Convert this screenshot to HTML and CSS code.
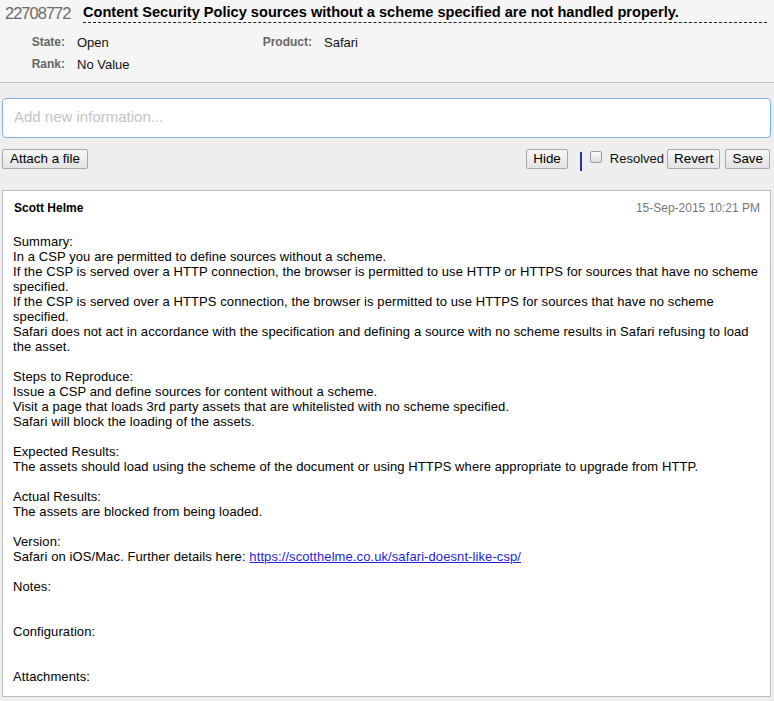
FILE: index.html
```html
<!DOCTYPE html>
<html lang="en">
<head>
<meta charset="utf-8">
<title>22708772 Content Security Policy sources without a scheme specified are not handled properly.</title>
<link rel="stylesheet" href="styles.css">
</head>
<body>
<div class="page">
  <header class="problem-header">
    <div class="title-row">
      <span class="problem-id">22708772</span>
      <h1 class="problem-title">Content Security Policy sources without a scheme specified are not handled properly.</h1>
    </div>
    <div class="meta-grid">
      <span class="meta-label">State:</span>
      <span class="meta-value">Open</span>
      <span class="meta-label">Product:</span>
      <span class="meta-value">Safari</span>
      <span class="meta-label">Rank:</span>
      <span class="meta-value">No Value</span>
    </div>
  </header>

  <div class="composer">
    <textarea class="new-info" placeholder="Add new information..."></textarea>
    <div class="actions">
      <button class="btn btn-attach" type="button">Attach a file</button>
      <div class="actions-right">
        <button class="btn" type="button">Hide</button>
        <span class="divider"></span>
        <label class="resolved"><span class="checkbox"></span><span class="resolved-text">Resolved</span></label>
        <button class="btn" type="button">Revert</button>
        <button class="btn" type="button">Save</button>
      </div>
    </div>
  </div>

  <article class="comment">
    <div class="comment-head">
      <span class="author">Scott Helme</span>
      <span class="date">15-Sep-2015 10:21 PM</span>
    </div>
    <div class="comment-body">Summary:
In a CSP you are permitted to define sources without a scheme.
If the CSP is served over a HTTP connection, the browser is permitted to use HTTP or HTTPS for sources that have no scheme
specified.
If the CSP is served over a HTTPS connection, the browser is permitted to use HTTPS for sources that have no scheme
specified.
Safari does not act in accordance with the specification and defining a source with no scheme results in Safari refusing to load
the asset.

Steps to Reproduce:
Issue a CSP and define sources for content without a scheme.
Visit a page that loads 3rd party assets that are whitelisted with no scheme specified.
Safari will block the loading of the assets.

Expected Results:
The assets should load using the scheme of the document or using HTTPS where appropriate to upgrade from HTTP.

Actual Results:
The assets are blocked from being loaded.

Version:
Safari on iOS/Mac. Further details here: <a class="link" href="#">https://scotthelme.co.uk/safari-doesnt-like-csp/</a>

Notes:


Configuration:


Attachments:</div>
  </article>
</div>
</body>
</html>
```

FILE: styles.css
```css
html, body {
  margin: 0;
  padding: 0;
}

body {
  background: #eeeeee;
  font-family: "Liberation Sans", Arial, sans-serif;
  color: #000;
  width: 774px;
  height: 701px;
  overflow: hidden;
}

.problem-header {
  background: #f5f5f5;
  border-bottom: 1px solid #c6c6c6;
  padding: 3px 0 7px 0;
}

.title-row {
  display: flex;
  align-items: flex-end;
  padding-left: 5px;
  padding-right: 7px;
}

.problem-id {
  font-size: 16.5px;
  letter-spacing: -1px;
  color: #6b6b6b;
  line-height: 19px;
  width: 78px;
  flex: none;
}

.problem-title {
  flex: 1;
  margin: 0;
  font-size: 14.6px;
  font-weight: bold;
  line-height: 19px;
  border-bottom: 1px dashed #222;
  white-space: nowrap;
}

.meta-grid {
  display: grid;
  grid-template-columns: 65px 170px 53px auto;
  column-gap: 12px;
  margin-top: 8px;
  grid-auto-rows: 22px;
  align-items: center;
}

.meta-label {
  text-align: right;
  font-weight: bold;
  font-size: 12px;
  color: #666;
}

.meta-value {
  font-size: 13px;
  color: #111;
}

.composer {
  padding: 15px 3px 0 2px;
}

.new-info {
  display: block;
  width: 100%;
  height: 40px;
  box-sizing: border-box;
  border: 1px solid #86ade0;
  border-radius: 4px;
  background: #fff;
  padding: 8px 11px;
  font-family: "Liberation Sans", Arial, sans-serif;
  font-size: 15px;
  line-height: 20px;
  resize: none;
  overflow: hidden;
  outline: none;
}

.new-info::placeholder {
  color: #c4c4c4;
}

.actions {
  display: flex;
  justify-content: space-between;
  align-items: flex-start;
  height: 20px;
  margin-top: 11px;
  padding-right: 1px;
}

.actions-right {
  display: flex;
  align-items: flex-start;
  height: 20px;
}

.btn {
  height: 20px;
  box-sizing: border-box;
  padding: 0 6px;
  border: 1px solid #a8a8a8;
  border-radius: 2px;
  background: linear-gradient(#f7f7f7, #e3e3e3);
  font-family: "Liberation Sans", Arial, sans-serif;
  font-size: 13.4px;
  line-height: 18px;
  color: #000;
}

.btn-attach {
  padding: 0 7px;
}

.divider {
  width: 2px;
  height: 19px;
  background: #1c3a98;
  margin: 3px 8px 0 12px;
}

.resolved {
  display: flex;
  align-items: flex-start;
  margin-right: 3px;
}

.checkbox {
  width: 12px;
  height: 12px;
  box-sizing: border-box;
  border: 1px solid #9a9a9a;
  border-radius: 2px;
  background: linear-gradient(#fcfcfc, #dedede);
  margin-top: 2px;
}

.resolved-text {
  font-size: 13px;
  line-height: 20px;
  margin-left: 8px;
  color: #111;
}

.actions-right .btn + .btn {
  margin-left: 5px;
}

.comment {
  margin: 21px 3px 0 2px;
  background: #fff;
  border: 1px solid #bcbcbc;
  padding: 10px 10px 12px 10px;
  height: 507px;
  box-sizing: border-box;
}

.comment-head {
  display: flex;
  justify-content: space-between;
  line-height: 15px;
  font-size: 12px;
}

.author {
  font-weight: bold;
  padding-left: 1px;
}

.date {
  color: #777;
}

.comment-body {
  margin-top: 18px;
  font-size: 13px;
  letter-spacing: 0.09px;
  line-height: 15px;
  white-space: pre-line;
}

.link {
  color: #1f1fd6;
  text-decoration: underline;
}
```
